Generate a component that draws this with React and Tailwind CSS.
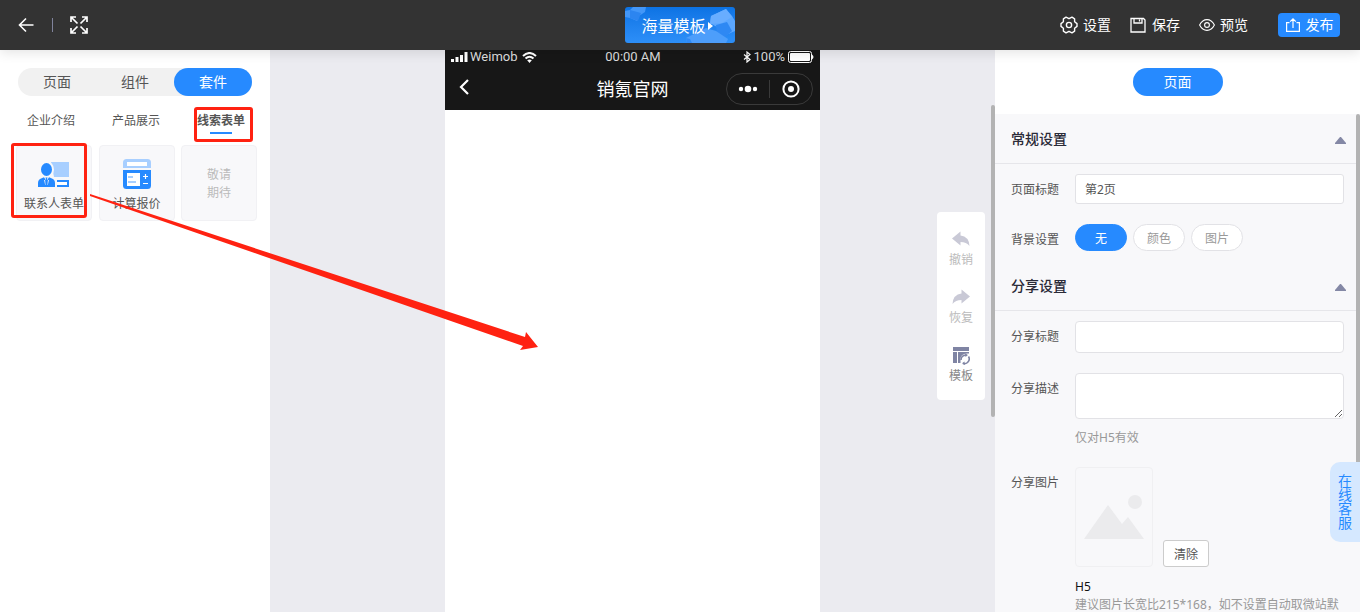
import React, { useState } from 'react';

const tabs = ['页面', '组件', '套件'];
const subTabs = ['企业介绍', '产品展示', '线索表单'];
const backgrounds = ['无', '颜色', '图片'];

const BackIcon = () => (
  <svg width="16" height="16" viewBox="0 0 16 16" fill="none" stroke="#fff" strokeWidth="1.6">
    <path d="M15.500 8H1.500M8 1.500L1.500 8 8 14.500" />
  </svg>
);

const ExpandIcon = () => (
  <svg width="18" height="18" viewBox="0 0 18 18" fill="none" stroke="#fff" strokeWidth="1.7">
    <path d="M1 6V1h5M12 1h5v5M17 12v5h-5M6 17H1v-5M1.500 1.500l6 6M16.500 1.500l-6 6M16.500 16.500l-6-6M1.500 16.500l6-6" />
  </svg>
);

const SettingsIcon = () => (
  <svg width="18" height="18" viewBox="0 0 18 18" fill="none" stroke="#fff" strokeWidth="1.4" strokeLinejoin="round">
    <path d="M17 7.600v2.800L14.600 12.300v2.900L12 16.800 9 15.300 6 16.800 3.400 15.200v-2.900L1 10.400V7.600L3.400 5.700V2.800L6 1.200 9 2.700 12 1.200l2.600 1.600v2.900z" />
    <circle cx="9" cy="9" r="2.600" />
  </svg>
);

const SaveIcon = () => (
  <svg width="16" height="16" viewBox="0 0 16 16" fill="none" stroke="#fff" strokeWidth="1.3">
    <path d="M1 1.500h12.500L15 3v12H1zM4 1.500V6h8V1.500M9.500 2.500v2" />
  </svg>
);

const EyeIcon = () => (
  <svg width="16" height="16" viewBox="0 0 16 16" fill="none" stroke="#fff" strokeWidth="1.100">
    <path d="M.6 8C2.500 4.300 5 2.600 8 2.600s5.500 1.700 7.400 5.400C13.500 11.700 11 13.400 8 13.400S2.500 11.700.6 8z" />
    <circle cx="8" cy="8" r="2.400" />
  </svg>
);

const PublishIcon = () => (
  <svg width="16" height="16" viewBox="0 0 16 16" fill="none" stroke="#fff" strokeWidth="1.200">
    <path d="M4.500 5.600H1.600v8.800h12.800V5.600h-2.900M8 11V2M5.200 4.600L8 1.800l2.800 2.800" />
  </svg>
);

const ContactIcon = () => (
  <svg width="32" height="27" viewBox="0 0 32 27">
    <path d="M13 0h18v15H16z" fill="#a8cfff" />
    <ellipse cx="9" cy="7.500" rx="7" ry="8" fill="#f8f8fa" />
    <ellipse cx="8.500" cy="7.500" rx="5.500" ry="6.500" fill="#268aff" />
    <path d="M0 25v-4q0-3.500 3-4.500l3.500-1.500h4l3.500 1.500q3 1 3 4.500v4z" fill="#268aff" />
    <path d="M5.800 15h5.400L8.500 19z" fill="#f8f8fa" />
    <path d="M6.500 18l1.200 5M10.500 18l-1.200 5" stroke="#f8f8fa" strokeWidth=".9" />
    <path d="M7.500 15.500h2l-.5 2 .6 5-1.100 1.500-1.100-1.500.6-5z" fill="#268aff" />
    <path d="M19 18h12v7H19z" fill="#268aff" />
    <path d="M19 20h10v3H19z" fill="#fff" />
  </svg>
);

const CalcIcon = () => (
  <svg width="28" height="30" viewBox="0 0 28 30">
    <path d="M0 9V3.500Q0 0 3.500 0h21Q28 0 28 3.500V9z" fill="#a8cfff" />
    <rect x="4" y="3" width="20" height="4" fill="#fff" />
    <path d="M0 11h28v15.500q0 3.500-3.500 3.500h-21Q0 30 0 26.500z" fill="#268aff" />
    <rect x="4" y="14" width="13" height="13" fill="#fff" />
    <path d="M5 18h5M5 23h8" stroke="#a8cfff" strokeWidth="2" />
    <path d="M20 17.500h5M22.500 15v5M20 24.500h5" stroke="#fff" strokeWidth="1.200" />
  </svg>
);

const UndoIcon = ({ flip }) => (
  <svg width="18" height="16" viewBox="0 0 18 16" fill="#c9c9d6" className={flip ? '-scale-x-100' : ''}>
    <path d="M0 7.500L8.500 .5v4q8.500 1 9 10.500-3-4-9-4v3.500z" />
  </svg>
);

const TemplateIcon = () => (
  <svg width="18" height="18" viewBox="0 0 18 18" fill="none">
    <path d="M1 0h16v4H1zM1 5h4v11H1zM6 5h11v1.500Q9.500 6 8.500 11v5H6z" fill="#7f84a3" />
    <path d="M9 13q0-4.500 5-5M16.500 9.500q2 3-1 6-2 1.800-4.500 1" stroke="#7f84a3" strokeWidth="1.600" />
    <path d="M13 6.300l3 1.700-2.500 2zM12.500 14.500l-2.500 1.700 3 1.800z" fill="#7f84a3" />
  </svg>
);

const TemplateArt = () => (
  <svg className="absolute inset-0 h-full w-full" viewBox="0 0 110 36" preserveAspectRatio="none">
    <path d="M0 4l5-1 3-3h13l-1 5-6 4-2 5-7-3-5-1z" fill="#4397f8" />
    <path d="M5 3l11 3-3 8-8-3z" fill="#2c85f0" />
    <path d="M86 9l15-7 6 7 3 5v10l-9 4-2-6-9-3-5-3z" fill="#5ba7ff" />
    <path d="M91 18l11-3 5 9-7 6-8-3z" fill="#2e88f3" />
    <path d="M86 9l15-7 6 8-10 6-12 1z" fill="#68adff" />
    <path d="M61 31l20-10 10 3 12 8-2 4H62z" fill="#4d9efb" />
    <path d="M61 31l4 1 2 4h-5z" fill="#2f8af5" />
  </svg>
);

const Header = () => (
  <header className="relative z-20 grid h-[50px] shrink-0 grid-cols-[1fr_auto_1fr] items-center bg-[#333] px-[18px] text-sm text-white shadow-[0_2px_12px_rgba(0,0,0,0.12)]">
    <div className="flex items-center">
      <button aria-label="返回"><BackIcon /></button>
      <span className="ml-[18px] h-[14px] w-px bg-[#80839c]" />
      <button aria-label="全屏" className="ml-[17px]"><ExpandIcon /></button>
    </div>
    <button className="relative h-9 w-[110px] overflow-hidden rounded-[3px] bg-linear-to-b from-[#0c73e4] to-[#2d8ff8] text-base">
      <TemplateArt />
      <span className="relative flex items-center justify-center gap-[2px] pt-[2px] pr-[6px]">
        海量模板
        <svg width="5" height="8" viewBox="0 0 5 8" fill="#fff"><path d="M0 0l5 4-5 4z" /></svg>
      </span>
    </button>
    <div className="mr-[2px] flex items-center justify-end gap-[19px]">
      <button className="flex items-center gap-[5px]"><SettingsIcon />设置</button>
      <button className="flex items-center gap-[6px]"><SaveIcon />保存</button>
      <button className="flex items-center gap-[5px]"><EyeIcon />预览</button>
      <button className="ml-[11px] flex h-6 w-[62px] items-center justify-center gap-[5px] rounded bg-[#268aff]"><PublishIcon />发布</button>
    </div>
  </header>
);

const SuiteCard = ({ icon, label }) => (
  <button className="flex h-[76px] w-[76px] flex-col items-center rounded-sm border border-[#f1f1f4] bg-[#f8f8fa] pt-[13px] text-[#555]">
    <span className="flex h-[30px] items-end">{icon}</span>
    <span className="mt-[6px] leading-[18px] whitespace-nowrap">{label}</span>
  </button>
);

const LeftPanel = () => {
  const [tab, setTab] = useState('套件');
  const [sub, setSub] = useState('线索表单');

  return (
    <aside className="w-[270px] shrink-0 bg-white pt-[18px]">
      <nav className="mx-[18px] grid grid-cols-3 rounded-full bg-[#f1f1f1] text-sm">
        {tabs.map((t) => (
          <button
            key={t}
            onClick={() => setTab(t)}
            className={`h-7 rounded-full ${tab === t ? 'bg-[#268aff] text-white' : 'text-[#555]'}`}
          >
            {t}
          </button>
        ))}
      </nav>
      <div className="mt-[11px] flex justify-between pr-[13px] pl-[15px]">
        {subTabs.map((t) => (
          <div key={t} className="relative">
            <button
              onClick={() => setSub(t)}
              className={`flex h-[35px] w-[72px] flex-col items-center pt-[5px] leading-[18px] ${sub === t ? 'font-bold text-[#555]' : 'text-[#555]'}`}
            >
              {t}
              {sub === t && <span className="mt-[2px] h-[2px] w-[22px] shrink-0 bg-[#268aff]" />}
            </button>
            {t === '线索表单' && (
              <span className="pointer-events-none absolute inset-y-0 right-1 left-[9px] rounded-[3px] border-3 border-[#ff2211]" />
            )}
          </div>
        ))}
      </div>
      <div className="mt-[3px] flex justify-between pr-[13px] pl-4">
        <div className="relative">
          <SuiteCard icon={<ContactIcon />} label="联系人表单" />
          <span className="pointer-events-none absolute -top-[2px] right-[5px] bottom-[3px] -left-[5px] rounded-[3px] border-3 border-[#ff2211]" />
        </div>
        <SuiteCard icon={<CalcIcon />} label="计算报价" />
        <div className="flex h-[76px] w-[76px] flex-col items-center justify-center rounded-sm border border-[#f1f1f4] bg-[#f8f8fa] pt-[2px] leading-[18px] text-[#bbb]">
          <span>敬请</span>
          <span>期待</span>
        </div>
      </div>
    </aside>
  );
};

const Phone = () => (
  <section className="flex flex-col bg-white">
    <div className="h-[60px] bg-[#171717] text-white">
      <div className="grid h-[14px] grid-cols-3 items-center pr-[5px] pl-[6px] font-[Roboto,'Liberation_Sans',sans-serif] text-[13px] leading-[14px] text-[#ddd]">
        <span className="flex items-center gap-[2px]">
          <svg width="17" height="10" viewBox="0 0 17 10" fill="#fff">
            <path d="M0 7h3v3H0zM4.500 5h3v5h-3zM9 3h3v7H9zM13.500 0h3v10h-3z" />
          </svg>
          Weimob
          <svg width="15" height="11" viewBox="0 0 15 11" fill="none" stroke="#fff" strokeWidth="2" className="ml-[2px]">
            <path d="M1 4q6.500-6 13 0M3.500 6.500q4-3.600 8 0" />
            <path d="M5.200 8.200q2.300-1.600 4.600 0L7.500 11z" fill="#fff" stroke="none" />
          </svg>
        </span>
        <span className="text-center">00:00 AM</span>
        <span className="flex items-center justify-end gap-[3px]">
          <svg width="8" height="12" viewBox="0 0 8 12" fill="none" stroke="#fff" strokeWidth="1.200">
            <path d="M1 3.500l6 5L4 11V1l3 2.500-6 5" />
          </svg>
          100%
          <svg width="27" height="12" viewBox="0 0 27 12">
            <rect x=".5" y=".5" width="23" height="11" rx="2" fill="none" stroke="#fff" />
            <rect x="2" y="2" width="20" height="8" rx="1" fill="#fff" />
            <path d="M24 3.500q3 2.500 0 5z" fill="#fff" />
          </svg>
        </span>
      </div>
      <div className="grid grid-cols-[1fr_auto_1fr] items-center px-[7px] pt-[9px]">
        <button aria-label="后退" className="justify-self-start pb-1 pl-[7px]">
          <svg width="10" height="16" viewBox="0 0 10 16" fill="none" stroke="#fff" strokeWidth="2.200"><path d="M9 1L2 8l7 7" /></svg>
        </button>
        <h1 className="text-lg leading-8">销氪官网</h1>
        <div className="flex h-8 w-[87px] items-center justify-self-end rounded-full border border-[#3a3a3a]">
          <button aria-label="更多" className="flex flex-1 justify-center">
            <svg width="20" height="8" viewBox="0 0 20 8" fill="#fff">
              <circle cx="3" cy="4" r="2.200" /><circle cx="10" cy="4" r="3.300" /><circle cx="17" cy="4" r="2.200" />
            </svg>
          </button>
          <span className="h-[18px] w-px bg-[#3a3a3a]" />
          <button aria-label="关闭" className="flex flex-1 justify-center">
            <svg width="18" height="18" viewBox="0 0 18 18" fill="none" stroke="#fff" strokeWidth="2">
              <circle cx="9" cy="9" r="7.600" /><circle cx="9" cy="9" r="3" fill="#fff" stroke="none" />
            </svg>
          </button>
        </div>
      </div>
    </div>
  </section>
);

const Canvas = () => (
  <main className="relative grid min-w-0 flex-1 grid-cols-[1fr_375px_1fr] bg-[#ebebf0]">
    <span />
    <Phone />
    <div className="mt-[162px] mr-[10px] flex h-[188px] w-12 flex-col items-center gap-5 justify-self-end rounded bg-white pt-[19px] leading-[18px] text-[#bbb]">
      <button className="flex h-[38px] flex-col items-center justify-between"><UndoIcon />撤销</button>
      <button className="flex h-[38px] flex-col items-center justify-between"><UndoIcon flip />恢复</button>
      <button className="flex h-[38px] flex-col items-center justify-between text-[#888]"><TemplateIcon />模板</button>
    </div>
    <span className="absolute top-[55px] right-0 h-[312px] w-1 rounded-full bg-[#b3b3b3]" />
  </main>
);

const SectionTitle = ({ children }) => (
  <h2 className="flex h-[50px] items-center justify-between border-b border-[#e6e6ea] pr-[10px] pl-4 text-sm font-medium text-[#2b2b38]">
    {children}
    <svg width="11" height="7" viewBox="0 0 11 7" fill="#8488a5" className="mt-1"><path d="M5 0h1l5 6v1H0V6z" /></svg>
  </h2>
);

const Field = ({ label, id, children }) => (
  <div className="flex items-start">
    <label htmlFor={id} className="h-[30px] w-16 shrink-0 leading-8">{label}</label>
    <div className="min-w-0 flex-1">{children}</div>
  </div>
);

const RightPanel = () => {
  const [title, setTitle] = useState('第2页');
  const [bg, setBg] = useState('无');

  return (
    <aside className="relative flex w-[365px] shrink-0 flex-col bg-[#f8f8fa] text-[#555]">
      <div className="flex h-16 shrink-0 justify-center bg-white pt-[18px]">
        <button className="h-7 w-[90px] rounded-full bg-[#268aff] text-sm text-white">页面</button>
      </div>
      <div className="mr-1 min-h-0 flex-1 overflow-hidden">
        <SectionTitle>常规设置</SectionTitle>
        <div className="flex flex-col gap-5 pt-[10px] pr-3 pb-[7px] pl-4">
          <Field label="页面标题" id="title">
            <input
              id="title"
              value={title}
              onChange={(e) => setTitle(e.target.value)}
              className="block h-[30px] w-full rounded-[3px] border border-[#e2e2e6] bg-white px-[9px]"
            />
          </Field>
          <Field label="背景设置">
            <div className="flex gap-[6px]">
              {backgrounds.map((b) => (
                <button
                  key={b}
                  onClick={() => setBg(b)}
                  className={`h-[27px] w-[52px] rounded-full border pt-[2px] ${bg === b ? 'border-[#268aff] bg-[#268aff] text-white' : 'border-[#e2e2e6] bg-white text-[#999]'}`}
                >
                  {b}
                </button>
              ))}
            </div>
          </Field>
        </div>
        <SectionTitle>分享设置</SectionTitle>
        <div className="flex flex-col gap-5 pt-[10px] pr-3 pl-4">
          <Field label="分享标题" id="share-title">
            <input id="share-title" className="block h-8 w-full rounded border border-[#e2e2e6] bg-white px-[9px]" />
          </Field>
          <Field label="分享描述" id="share-desc">
            <textarea id="share-desc" className="block h-[46px] w-full rounded border border-[#e2e2e6] bg-white px-[9px]" />
            <p className="mt-[10px] leading-[18px] text-[#999]">仅对H5有效</p>
          </Field>
          <Field label="分享图片">
            <div className="flex items-end gap-[10px]">
              <div className="flex h-[100px] w-[78px] justify-center rounded border border-[#f0f0f2] pt-[26px]">
                <svg width="60" height="46" viewBox="0 0 60 46" fill="#ebebed">
                  <path d="M0 45l24-34 14 19 6-7 16 22z" /><circle cx="51" cy="8" r="7" />
                </svg>
              </div>
              <button className="h-[27px] w-[46px] rounded-[3px] border border-[#ccc] bg-white pt-[2px]">清除</button>
            </div>
            <p className="mt-[11px] leading-[18px] text-[#111]">H5</p>
            <p className="leading-[18px] whitespace-nowrap text-[#999]">建议图片长宽比215*168，如不设置自动取微站默</p>
          </Field>
        </div>
      </div>
      <span className="absolute top-16 right-0 h-[348px] w-1 rounded-t-full bg-[#b3b3b3]" />
      <button className="absolute top-[412px] right-0 flex h-20 w-[30px] items-center justify-center rounded-l-[10px] bg-[#d5e8ff] px-2 text-sm leading-[14px] text-[#268aff]">
        在线客服
      </button>
    </aside>
  );
};

// Drag hint from the contact form card to the phone canvas
const DragArrow = () => (
  <svg className="pointer-events-none absolute top-[190px] left-[88px] z-10" width="452" height="164" viewBox="0 0 452 164" fill="#ff2211">
    <path d="M2 4L437 147l1-5 12 15-18 3 3-4L2 6z" />
  </svg>
);

export default function App() {
  return (
    <div className="relative flex h-screen flex-col overflow-hidden font-['Noto_Sans','Noto_Sans_CJK_SC',sans-serif] text-xs">
      <Header />
      <div className="flex min-h-0 flex-1">
        <LeftPanel />
        <Canvas />
        <RightPanel />
      </div>
      <DragArrow />
    </div>
  );
}
